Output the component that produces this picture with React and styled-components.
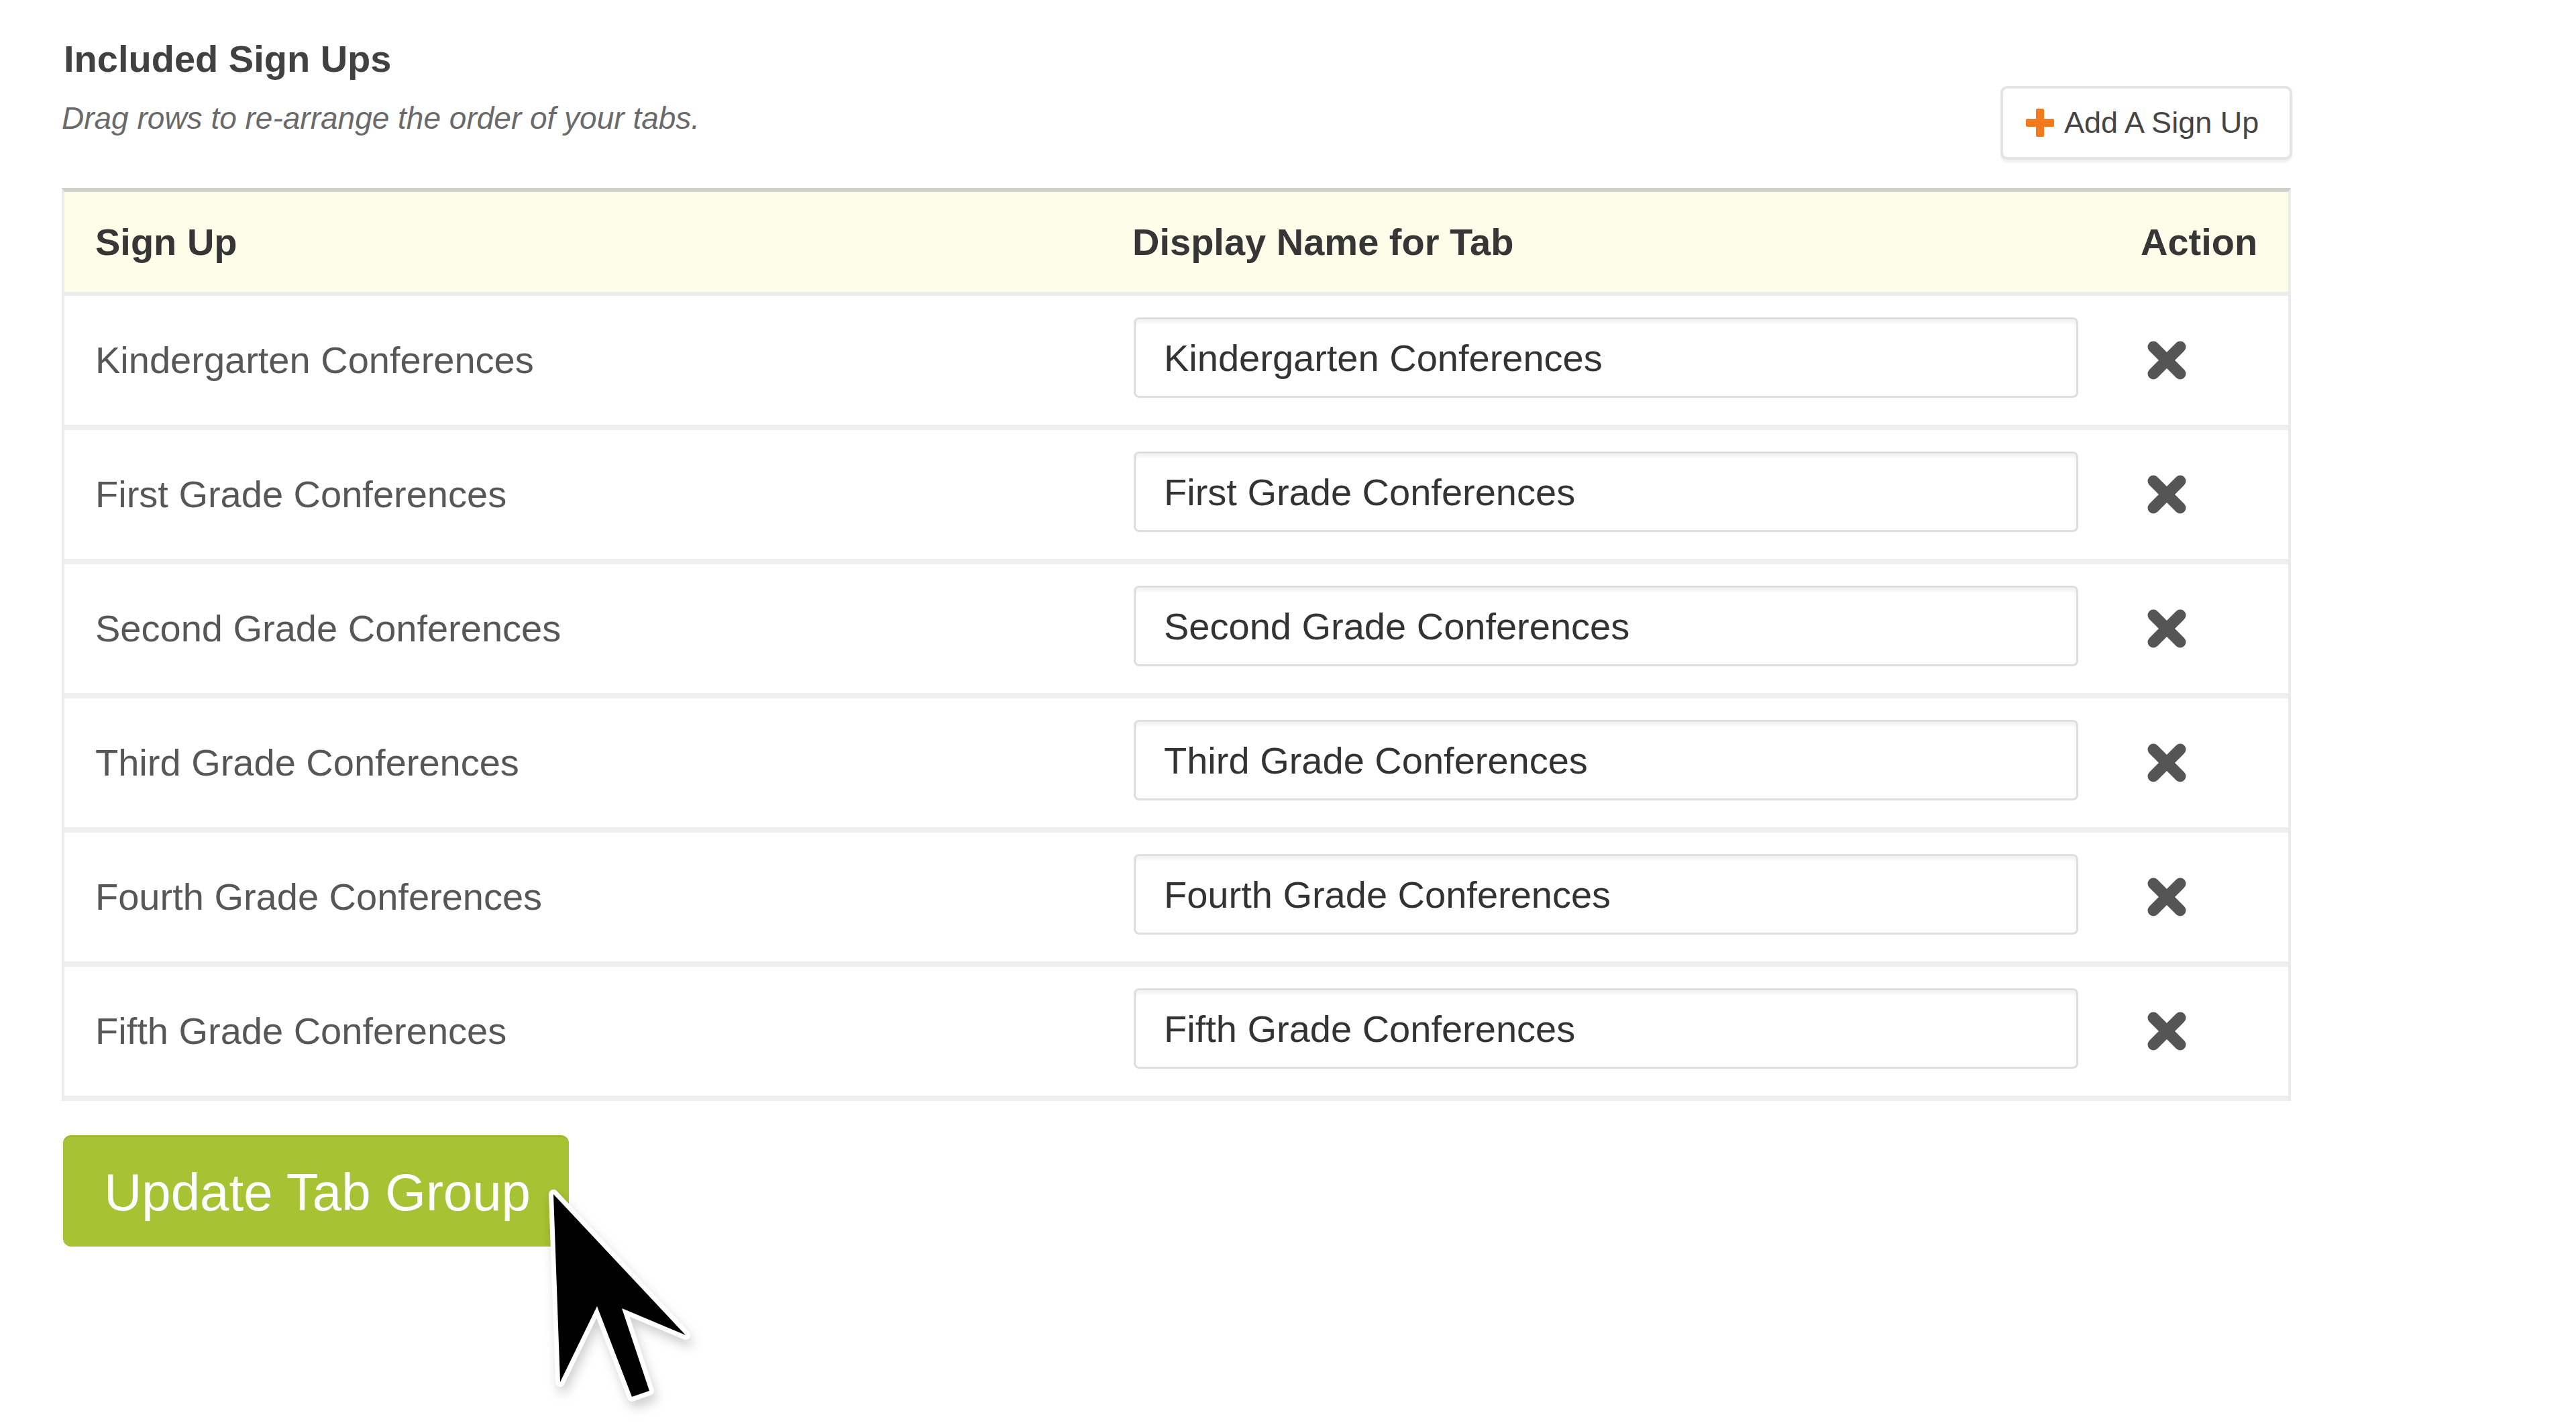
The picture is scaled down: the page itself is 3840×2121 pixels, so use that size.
import React from "react";
import styled, { createGlobalStyle } from "styled-components";

const GlobalStyle = createGlobalStyle`
  html, body {
    margin: 0;
    padding: 0;
    background: #ffffff;
  }
  body {
    font-family: "Liberation Sans", Arial, Helvetica, sans-serif;
    color: #444;
  }
  * { box-sizing: border-box; }
`;

const Page = styled.div`
  padding: 56px 0 0 92px;
  min-height: 2121px;
`;

const HeaderBar = styled.div`
  width: 3325px;
  display: flex;
  justify-content: space-between;
  align-items: flex-start;
`;

const TitleBlock = styled.div`
  display: flex;
  flex-direction: column;
`;

const Title = styled.h2`
  margin: 0 0 0 3px;
  font-size: 56px;
  line-height: 64px;
  font-weight: 700;
  color: #414141;
`;

const Subtitle = styled.p`
  margin: 29px 0 0 0;
  font-size: 46px;
  line-height: 54px;
  font-style: italic;
  color: #6a6a6a;
`;

const AddButton = styled.button`
  margin-top: 72px;
  width: 435px;
  height: 110px;
  display: flex;
  align-items: center;
  gap: 15px;
  padding: 0 0 0 34px;
  background: #ffffff;
  border: 4px solid #e4e4e4;
  border-radius: 10px;
  box-shadow: 0 4px 3px rgba(0, 0, 0, 0.06);
  font-family: inherit;
  font-size: 45px;
  color: #454545;
  cursor: pointer;
`;

const Table = styled.div`
  margin-top: 42px;
  width: 3323px;
  border-left: 4px solid #ebebeb;
  border-right: 4px solid #ebebeb;
  border-top: 6px solid #cfcfcb;
`;

const Grid = styled.div`
  display: grid;
  grid-template-columns: 1544px 1501px 1fr;
  align-items: center;
`;

const HeadRow = styled(Grid)`
  height: 155px;
  background: #fdfde9;
  border-bottom: 6px solid #ececec;
`;

const HeadCell = styled.div`
  padding-left: ${(p) => p.$pad}px;
  font-size: 56px;
  line-height: 64px;
  font-weight: 700;
  color: #363636;
`;

const Row = styled(Grid)`
  height: 200px;
  background: #ffffff;
  border-bottom: 8px solid #efefef;
`;

const NameCell = styled.div`
  padding-left: 46px;
  font-size: 56px;
  line-height: 64px;
  color: #575757;
`;

const InputCell = styled.div`
  padding-left: 50px;
  display: flex;
  align-items: center;
`;

const TabInput = styled.input`
  width: 1408px;
  height: 120px;
  margin-bottom: 8px;
  padding: 0 0 0 42px;
  border: 3px solid #dedede;
  border-radius: 8px;
  box-shadow: inset 0 5px 4px rgba(0, 0, 0, 0.05);
  font-family: inherit;
  font-size: 56px;
  color: #333333;
  background: #ffffff;
  outline: none;
`;

const ActionCell = styled.div`
  padding-left: 58px;
  display: flex;
  align-items: center;
`;

const RemoveButton = styled.button`
  width: 62px;
  height: 60px;
  padding: 0;
  border: none;
  background: transparent;
  display: flex;
  cursor: pointer;
`;

const Footer = styled.div`
  position: relative;
  margin-top: 51px;
  width: 1200px;
`;

const UpdateButton = styled.button`
  margin-left: 2px;
  width: 754px;
  height: 166px;
  padding: 0 0 0 61px;
  text-align: left;
  background: #a7c233;
  border: none;
  border-top: 3px solid #9db82b;
  border-radius: 12px;
  font-family: inherit;
  font-size: 78px;
  line-height: 90px;
  color: #ffffff;
  cursor: pointer;
`;

const Cursor = styled.svg`
  position: absolute;
  left: 698px;
  top: 58px;
  overflow: visible;
  filter: drop-shadow(4px 10px 8px rgba(0, 0, 0, 0.18));
`;

const PlusIcon = () => (
  <svg width="42" height="42" viewBox="0 0 42 42" aria-hidden="true">
    <rect x="15" y="0" width="12" height="42" rx="2" fill="#f27a1c" />
    <rect x="0" y="15" width="42" height="12" rx="2" fill="#f27a1c" />
  </svg>
);

const XIcon = () => (
  <svg width="62" height="60" viewBox="0 0 62 60" aria-hidden="true">
    <path
      d="M11 10 L51 50 M51 10 L11 50"
      stroke="#555555"
      strokeWidth="17"
      strokeLinecap="round"
    />
  </svg>
);

const rows = [
  "Kindergarten Conferences",
  "First Grade Conferences",
  "Second Grade Conferences",
  "Third Grade Conferences",
  "Fourth Grade Conferences",
  "Fifth Grade Conferences",
];

export default function App() {
  return (
    <>
      <GlobalStyle />
      <Page>
        <HeaderBar>
          <TitleBlock>
            <Title>Included Sign Ups</Title>
            <Subtitle>Drag rows to re-arrange the order of your tabs.</Subtitle>
          </TitleBlock>
          <AddButton>
            <PlusIcon />
            <span>Add A Sign Up</span>
          </AddButton>
        </HeaderBar>

        <Table>
          <HeadRow>
            <HeadCell $pad={46}>Sign Up</HeadCell>
            <HeadCell $pad={48}>Display Name for Tab</HeadCell>
            <HeadCell $pad={50}>Action</HeadCell>
          </HeadRow>
          {rows.map((name) => (
            <Row key={name}>
              <NameCell>{name}</NameCell>
              <InputCell>
                <TabInput defaultValue={name} readOnly />
              </InputCell>
              <ActionCell>
                <RemoveButton aria-label="Remove">
                  <XIcon />
                </RemoveButton>
              </ActionCell>
            </Row>
          ))}
        </Table>

        <Footer>
          <UpdateButton>Update Tab Group</UpdateButton>
          <Cursor width="260" height="370" viewBox="0 0 260 370" aria-hidden="true">
            <path
              d="M35 30 L45 310 L100 197 L152 332 L178 323 L137 200 L232 240 Z"
              fill="#000000"
              stroke="#ffffff"
              strokeWidth="14"
              strokeLinejoin="round"
              paintOrder="stroke"
            />
          </Cursor>
        </Footer>
      </Page>
    </>
  );
}
